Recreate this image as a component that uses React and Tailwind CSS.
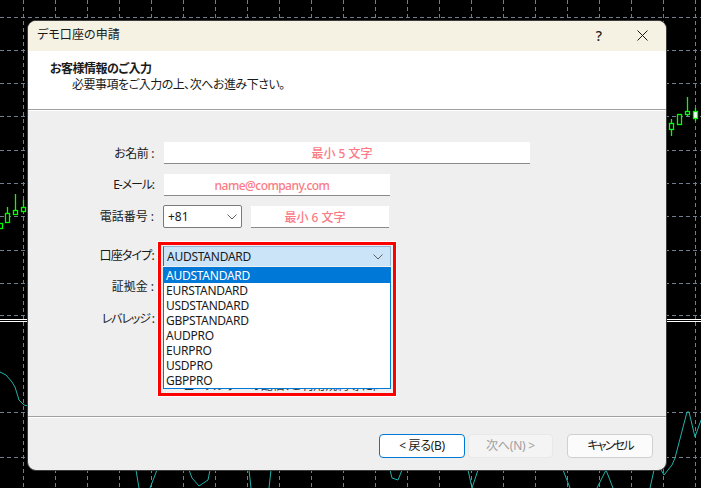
import React from "react";

const FONT = "font-['Noto_Sans','Noto_Sans_CJK_JP',sans-serif] [font-feature-settings:'palt']";
const vx = Array.from({ length: 22 }, (_, i) => 23.5 + i * 32);
const hy = [17.5, 50.5, 83.5, 116.5, 150.5, 183.5, 216.5, 250.5, 283.5, 315.5, 412.5, 457.5];
const options = ["AUDSTANDARD", "EURSTANDARD", "USDSTANDARD", "GBPSTANDARD", "AUDPRO", "EURPRO", "USDPRO", "GBPPRO"];

function Candle({ x, top, bottom, wickTop, wickBottom, w = 4, fill = "none" }) {
  return (
    <g stroke="#00ff00" strokeWidth="1.3">
      <line x1={x} x2={x} y1={wickTop} y2={wickBottom} />
      <rect x={x - w / 2} y={top + 0.5} width={w} height={bottom - top} fill={fill === "none" ? "#000000" : fill} />
    </g>
  );
}

function Chart() {
  const lines = [
    "0,372 6,375 12,382 15,387 19,400 24,405 28,406",
    "136,470 139,488",
    "150,488 157,470",
    "189,470 192,478 199,486 208,480 210,470",
    "249,470 251,488",
    "269,488 271,470",
    "390,470 392,478 398,480 402,470",
    "468,470 472,488 478,470",
    "563,470 570,488",
    "597,488 606,470 613,488",
    "650,488 654,470",
    "660,468 664,475 672,465 675,458 687,412 689,412 695,437 701,420",
  ];
  return (
    <svg className="absolute inset-0" width="701" height="488">
      {vx.map((x) => (
        <line key={x} x1={x} x2={x} y1="0" y2="488" stroke="#6f7f8f" strokeDasharray="4 3" />
      ))}
      {hy.map((y) => (
        <line key={y} x1="0" x2="701" y1={y} y2={y} stroke="#6f7f8f" strokeDasharray="4 3" />
      ))}
      <line x1="0" x2="701" y1="319.5" y2="319.5" stroke="#ffffff" />
      <line x1="0" x2="701" y1="321.5" y2="321.5" stroke="#ffffff" />
      {lines.map((p) => (
        <polyline key={p} points={p} fill="none" stroke="#20b2aa" strokeWidth="1" />
      ))}
      <Candle x={0.5} top={223} bottom={228} wickTop={223} wickBottom={228} />
      <Candle x={7.5} top={213} bottom={222} wickTop={207} wickBottom={222} />
      <Candle x={15.5} top={210} bottom={214} wickTop={194} wickBottom={214} />
      <Candle x={23.5} top={207} bottom={211} wickTop={200} wickBottom={211} />
      <Candle x={671.5} top={123} bottom={129} wickTop={119} wickBottom={136} />
      <Candle x={679.5} top={114} bottom={124} wickTop={114} wickBottom={124} />
      <Candle x={687.5} top={111} bottom={114} wickTop={97} wickBottom={116} />
      <Candle x={695.5} top={111} bottom={118} wickTop={108} wickBottom={121} fill="#ffffff" />
    </svg>
  );
}

function Chevron({ color = "#606060" }) {
  return (
    <svg width="10" height="6" viewBox="0 0 10 6">
      <path d="M0.5 0.5 L5 5 L9.5 0.5" fill="none" stroke={color} strokeWidth="1" />
    </svg>
  );
}

function Label({ className = "", children }) {
  return <div className={`w-[126px] shrink-0 text-right text-[12px] leading-[16px] text-[#1a1a1a] ${className}`}>{children}</div>;
}

function Hint({ className, children }) {
  return (
    <div className={`flex h-[22px] items-center justify-center border-b border-[#8a8a8a] bg-white pr-[10px] pt-[2px] text-[12px] font-medium text-[#fb7a85] ${className}`}>
      {children}
    </div>
  );
}

function Button({ className, children }) {
  return (
    <div className={`flex h-[24px] items-center justify-center rounded-[4px] border text-[12px] ${className}`}>
      {children}
    </div>
  );
}

export default function App() {
  return (
    <div className={`relative h-[488px] w-[701px] overflow-hidden bg-black ${FONT}`}>
      <Chart />
      <div className="absolute left-[27px] top-[20px] flex h-[451px] w-[640px] flex-col overflow-hidden rounded-[9px] border border-[#3c3c3c] bg-[#efefef]">
        <div className="flex h-[30px] shrink-0 items-center bg-[#f5f1e3] pb-[2px] pl-[9px] text-[12px] tracking-[0.1px] text-[#1a1a1a]">
          <span className="flex-1">デモ口座の申請</span>
          <span className="mr-[35px] text-[14px] font-medium">?</span>
          <svg className="mr-[18px]" width="11" height="11" viewBox="0 0 11 11">
            <path d="M0.5 0.5 L10.5 10.5 M10.5 0.5 L0.5 10.5" stroke="#1a1a1a" strokeWidth="1" />
          </svg>
        </div>

        <div className="h-[59px] shrink-0 border-b border-[#a0a0a0] bg-white pl-[22px] pt-[10px] text-[12px] leading-[16px] tracking-[-0.5px] text-[#1a1a1a]">
          <div className="font-bold">お客様情報のご入力</div>
          <div className="pl-[22px]">必要事項をご入力の上、次へお進み下さい。</div>
        </div>

        <div className="relative flex h-[307px] shrink-0 flex-col border-b border-t border-b-[#a0a0a0] border-t-white pt-[31px]">
          <div className="flex h-[22px] items-center gap-[10px]">
            <Label className="pt-[1px] tracking-[-0.4px]">お名前 :</Label>
            <Hint className="w-[366px]">最小 5 文字</Hint>
          </div>
          <div className="mt-[10px] flex h-[22px] items-center gap-[10px]">
            <Label className="tracking-[-1.1px]">E-メール:</Label>
            <Hint className="w-[226px] tracking-[-0.55px]">name@company.com</Hint>
          </div>
          <div className="mt-[9px] flex h-[23px] items-end">
            <div className="w-[126px] shrink-0 self-center">
              <Label>電話番号 :</Label>
            </div>
            <div className="ml-[9px] flex h-[23px] w-[79px] items-center justify-between rounded-[2px] border border-[#7a7a7a] bg-white pl-[4px] pr-[4px] text-[12px] text-[#1a1a1a]">
              <span>+81</span>
              <Chevron />
            </div>
            <Hint className="ml-[9px] w-[138px]">最小 6 文字</Hint>
          </div>

          <div className="relative mt-[18px] flex h-[20px] items-center">
            <Label className="tracking-[-0.8px]">口座タイプ:</Label>
            <div className="relative ml-[9px] flex h-[20px] w-[228px] items-center justify-between border border-b-0 border-[#8fb4d4] border-l-[#0078d7] bg-[#cce4f7] pl-[3px] pr-[7px] text-[12px] tracking-[-0.25px] text-[#1a1a1a]">
              <span>AUDSTANDARD</span>
              <Chevron />
              <div className="absolute left-[-1px] top-[20px] z-20 w-[228px] border border-[#0078d7] bg-white text-[12px] leading-[15px] text-[#1a1a1a]">
                {options.map((o, i) => (
                  <div key={o} className={`h-[15px] pl-[2px] ${i === 0 ? "bg-[#0078d7] text-white" : ""}`}>
                    {o}
                  </div>
                ))}
              </div>
            </div>
          </div>
          <div className="mt-[11px] flex h-[20px] items-center">
            <Label>証拠金 :</Label>
          </div>
          <div className="mt-[12px] flex h-[20px] items-center">
            <Label className="tracking-[-1.1px]">レバレッジ :</Label>
          </div>
          <div className="ml-[145px] mt-[49px] h-[15px] w-[207px] overflow-hidden whitespace-nowrap text-[12px] leading-[15px] text-[#333333]">
            ニュースレターの配信、ご利用規約等に同意の上、申請します。
          </div>

          <div className="absolute left-[130px] top-[131px] z-30 h-[154px] w-[238px] border-[3px] border-[#ff0000] outline outline-1 outline-white" />
        </div>

        <div className="flex flex-1 items-start border-t border-white pl-[351px] pt-[16px]">
          <Button className="w-[86px] border-[#0078d7] bg-white tracking-[-0.3px] text-[#1a1a1a]">&lt; 戻る(B)</Button>
          <Button className="ml-[3px] w-[85px] border-[#e8e8e8] bg-[#f4f4f4] tracking-[-0.2px] text-[#a0a0a0]">次へ(N) &gt;</Button>
          <Button className="ml-[14px] w-[86px] border-[#d0d0d0] bg-[#fbfbfb] tracking-[-1.8px] text-[#1a1a1a]">キャンセル</Button>
        </div>
      </div>
    </div>
  );
}
